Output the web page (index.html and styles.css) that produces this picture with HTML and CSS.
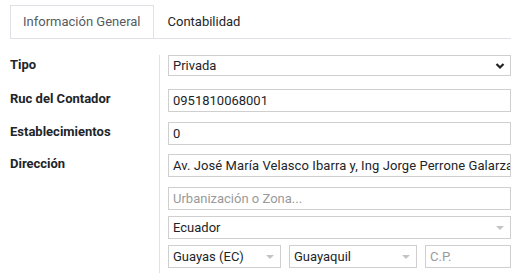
FILE: index.html
```html
<!DOCTYPE html>
<html lang="es">
<head>
  <meta charset="UTF-8">
  <title>Contribuyente</title>
  <link rel="stylesheet" href="styles.css">
</head>
<body>
  <div class="sheet">
    <!-- Tabs -->
    <ul class="tabs">
      <li class="tab active">Información General</li>
      <li class="tab">Contabilidad</li>
    </ul>

    <div class="form">
      <div class="row">
        <label class="label">Tipo</label>
        <div class="field">
          <div class="control select">
            <span>Privada</span>
            <svg class="chevron" width="10" height="8" viewBox="0 0 10 8">
              <path d="M1.5 2 L5 5.5 L8.5 2" fill="none" stroke="#222" stroke-width="2.2"/>
            </svg>
          </div>
        </div>
      </div>

      <div class="row">
        <label class="label">Ruc del Contador</label>
        <div class="field">
          <div class="control">0951810068001</div>
        </div>
      </div>

      <div class="row">
        <label class="label">Establecimientos</label>
        <div class="field">
          <div class="control">0</div>
        </div>
      </div>

      <div class="row">
        <label class="label">Dirección</label>
        <div class="field address">
          <div class="control street">Av. José María Velasco Ibarra y, Ing Jorge Perrone Galarza</div>
          <div class="control placeholder">Urbanización o Zona...</div>
          <div class="control combo"><span>Ecuador</span><i class="caret"></i></div>
          <div class="line">
            <div class="control combo state"><span>Guayas (EC)</span><i class="caret"></i></div>
            <div class="control combo city"><span>Guayaquil</span><i class="caret"></i></div>
            <div class="control placeholder zip">C.P.</div>
          </div>
        </div>
      </div>
    </div>
  </div>
</body>
</html>
```

FILE: styles.css
```css
/* General */
body {
  margin: 0;
  font-family: 'Roboto', 'Liberation Sans', sans-serif;
  font-size: 13px;
  color: #212529;
  background: #fff;
}

.sheet {
  padding: 5px 3px 0 10px;
}

/* Tabs */
.tabs {
  display: flex;
  list-style: none;
  margin: 0;
  padding: 0;
  border-bottom: 1px solid #dee2e6;
}

.tab {
  height: 32px;
  line-height: 32px;
  padding: 0 13px;
  white-space: nowrap;
  color: #212529;
  border: 1px solid transparent;
  border-bottom: none;
}

.tab.active {
  padding: 0 12px;
  color: #555b61;
  border-color: #dee2e6;
}

/* Form */
.form {
  margin-top: 16px;
}

.row {
  display: flex;
}

.label {
  width: 149px;
  flex-shrink: 0;
  font-weight: bold;
  line-height: 19px;
}

.row:first-child .label {
  line-height: 20px;
}

.field {
  flex: 1;
  min-width: 0;
  border-left: 1px solid #e2e2e2;
  padding: 0 0 9px 8px;
}

.row:nth-child(1) .field {
  padding-bottom: 13px;
}

.row:nth-child(2) .field {
  padding-bottom: 10px;
}

.row:last-child .field {
  padding-bottom: 5px;
}

.control {
  height: 23px;
  line-height: 21px;
  box-sizing: border-box;
  border: 1px solid #cfcfcf;
  padding: 0 4px;
  white-space: nowrap;
  overflow: hidden;
}

.select {
  height: 21px;
  line-height: 19px;
  display: flex;
  justify-content: space-between;
  align-items: center;
}

.chevron {
  margin-right: 1px;
}

.street {
  letter-spacing: 0.08px;
}

.placeholder {
  color: #9a9a9a;
}

.address {
  display: flex;
  flex-direction: column;
  gap: 6px;
}

.address .street {
  margin-bottom: 4px;
}

.combo {
  display: flex;
  justify-content: space-between;
  align-items: center;
}

.caret {
  width: 0;
  height: 0;
  border-left: 4px solid transparent;
  border-right: 4px solid transparent;
  border-top: 4px solid #c4c4c4;
  margin-right: 2px;
}

.line {
  display: flex;
  gap: 8px;
}

.state {
  width: 113px;
}

.city {
  width: 128px;
}

.zip {
  flex: 1;
}
```
